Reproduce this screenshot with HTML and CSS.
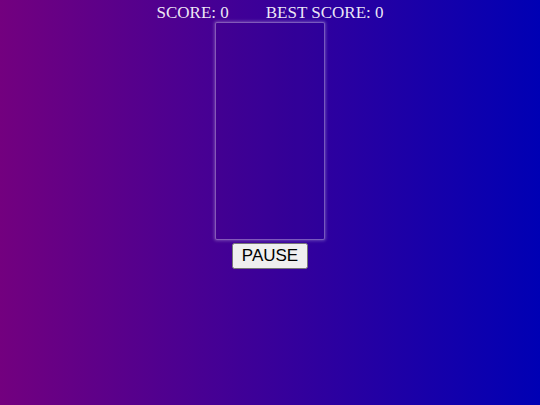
FILE: index.html
```html
<!DOCTYPE html>
<html>
<head>
<meta charset="utf-8">
<link rel="stylesheet" href="styles.css">
</head>
<body>
<div class="game">
  <div class="scores">
    <span class="score">SCORE: 0</span>
    <span class="score">BEST SCORE: 0</span>
  </div>
  <div class="board"></div>
  <button class="pause">PAUSE</button>
</div>
</body>
</html>
```
FILE: styles.css
```css
html, body {
  margin: 0;
  height: 100%;
}
body {
  background: linear-gradient(to right, #73007f, #0000b4);
  font-family: "Liberation Serif", serif;
}
.game {
  display: flex;
  flex-direction: column;
  align-items: center;
}
.scores {
  display: flex;
  gap: 37px;
  color: rgba(255, 255, 255, 0.92);
  font-size: 17px;
  line-height: 20px;
  margin-top: 3px;
}
.board {
  width: 108px;
  height: 216px;
  margin-top: -1px;
  border: 1px solid rgba(255, 255, 255, 0.35);
  box-shadow: 0 0 3px 1px rgba(255, 255, 255, 0.25);
  background: rgba(0, 0, 0, 0.02);
  border-radius: 2px;
}
.pause {
  margin-top: 3px;
  font-family: "Liberation Sans", Arial, sans-serif;
  font-size: 17px;
  height: 26px;
  width: 76px;
  padding: 0;
}
```
